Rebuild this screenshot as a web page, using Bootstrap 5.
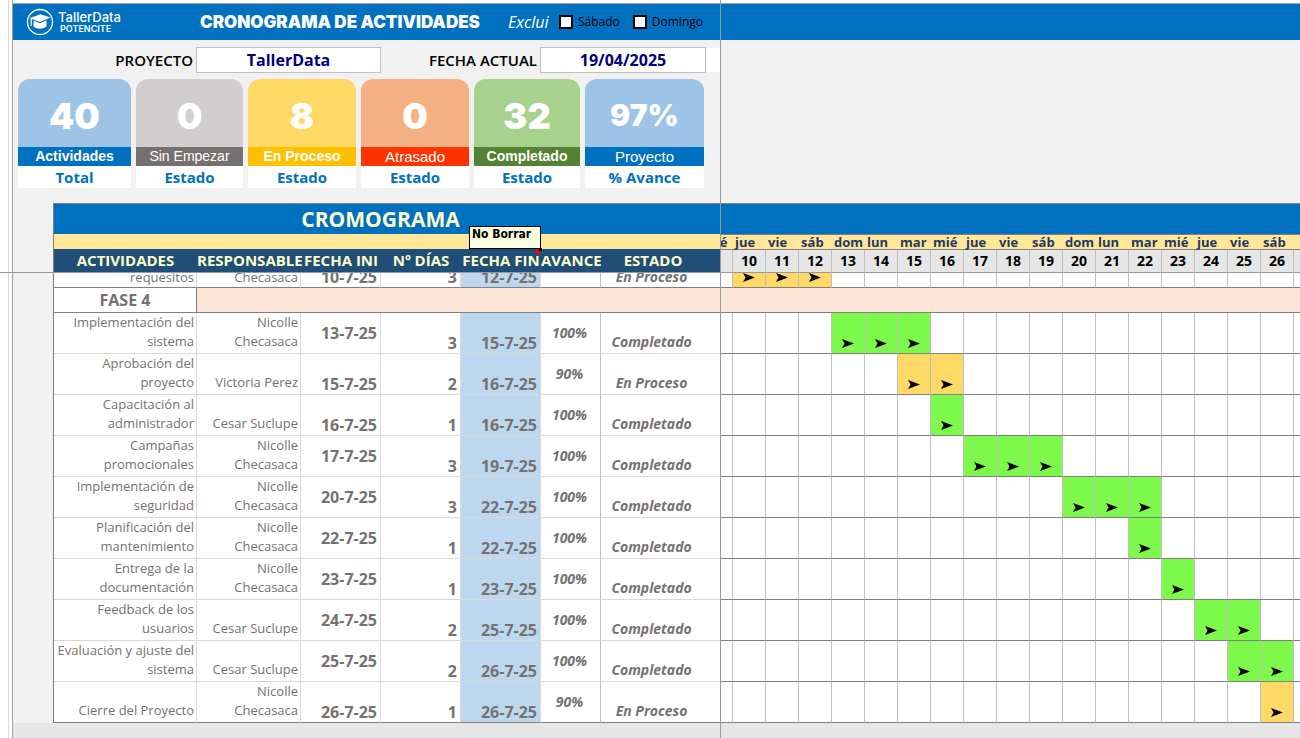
<!DOCTYPE html>
<html lang="es">
<head>
<meta charset="utf-8">
<meta name="viewport" content="width=device-width, initial-scale=1">
<title>Cronograma de actividades</title>
<link rel="stylesheet" href="https://cdn.jsdelivr.net/npm/bootstrap@5.3.0/dist/css/bootstrap.min.css">
<style>
  :root { --azul: #0070c0; --marino: #1f4e78; --linea: #7f7f7f; --tenue: #d9d9d9; --rejilla: #bfbfbf; --gris: #757171; }
  body { font-family: "Open Sans", "Noto Sans", sans-serif; font-size: 14px; line-height: 20px; color: #000; background: #fff; }
  .gutter { width: 13px; border-right: 1px solid #a0a0a0; padding-left: 8px; }
  .gutter::before { content: ""; display: block; height: 100%; border-left: 1px solid var(--tenue); }
  .sheet { background: #f1f1f1; padding-top: 3px; min-width: 0; }
  .sheet-tail { background: #e6e6e6; }
  .split-v { left: 720px; top: 0; bottom: 0; width: 1px; background: #999; z-index: 3; }
  .split-h { left: 0; top: 272px; width: 54px; height: 1px; background: #999; z-index: 3; }

  .topbar { background: var(--azul); border-top: 1px solid #a0a0a0; height: 37px; color: #fff; }
  .frozen { width: 707px; flex: none; }
  .above { height: 3px; margin-top: -3px; background: #fff; }
  .brand { width: 187px; padding-left: 13px; color: #fff; text-decoration: none; font-family: Inter, sans-serif; }
  .brand-name { font-size: 13px; line-height: 13px; font-weight: 500; }
  .brand-sub { font-size: 9px; line-height: 9px; font-weight: 600; padding-left: 2px; }
  .heading { font-family: Inter, sans-serif; font-weight: 900; font-size: 17px; width: 308px; }
  .excl { font-size: 16px; font-style: italic; width: 51px; }
  .topbar label { font-size: 12px; color: #000; }
  .tick { appearance: none; width: 14px; height: 14px; margin: 0 5px 0 0; background: #fff; border: 2px solid #000; border-radius: 0; }
  .tick:checked { background: #000; box-shadow: inset 0 0 0 2px #fff; }
  .gap-label { margin-right: 13px; }

  .fields { padding-top: 7px; }
  .fields label { font-weight: 600; font-size: 15px; text-align: right; padding-right: 3px; }
  .fields .form-control { height: 26px; padding: 0; border: 1px solid var(--rejilla); border-radius: 0; text-align: center; font-weight: 700; font-size: 16px; color: #000080; background: #fff; }
  .w-pro { width: 183px; } .in-pro { width: 185px; }
  .w-fec { width: 159px; } .in-fec { width: 166px; }
  .filler { background: #fff; height: 24px; }

  .tiles { display: grid; grid-template-columns: 118px 112px 113px 113px 111px 119px; padding: 6px 0 0 5px; height: 130px; }
  .tile { margin-right: 5px; text-align: center; }
  .tile:last-child { margin-right: 0; }
  .tile-num { height: 68px; border-radius: 12px 12px 0 0; color: #fff; font-family: Inter, sans-serif; font-weight: 900; font-size: 36px; line-height: 74px; }
  .tile-pct { font-size: 30px; line-height: 72px; }
  .tile-tag { height: 19px; color: #fff; font: 15px/19px "Liberation Sans", Arial, sans-serif; }
  .tile-tag.strong { font-weight: 700; }
  .tile-tag.strong, .tile-tag.tight { font-size: 14px; }
  .tile-foot { height: 22px; background: #fff; color: var(--azul); font-weight: 700; font-size: 15px; line-height: 23px; }

  .plan-wrap { padding-left: 40px; overflow: hidden; }
  .plan { table-layout: fixed; width: 100%; border-collapse: separate; border-spacing: 0; border-left: 1px solid var(--linea); background: #fff; }
  .plan th, .plan td { padding: 0; border: 0 solid var(--tenue); border-width: 0 1px 1px 0; white-space: nowrap; }
  .plan thead th { border-right-width: 0; font-weight: 700; text-align: center; }
  .c1 { width: 143px; } .c2 { width: 104px; } .c3, .c4, .c5 { width: 80px; } .c6 { width: 60px; } .c7 { width: 120px; } .c8 { width: 12px; } .cd { width: 33px; }
  .plan .r-title th { background: var(--azul); border-top: 1px solid var(--linea); height: 32px; font-size: 21px; color: #ffffcc; padding-right: 14px; border-bottom-color: #ffe699; }
  .plan .r-title th + th { border-bottom-color: var(--linea); }
  .plan .r-week th { background: #ffe699; height: 15px; line-height: 14px; color: #1f3864; border-bottom-color: var(--marino); font-size: 13px; text-align: left; }
  .plan .r-week th + th { border-bottom-color: var(--linea); padding-left: 2px; }
  .plan .r-head th { background: var(--marino); color: #ffffcc; height: 23px; line-height: 20px; padding-bottom: 2px; font-size: 15px; border-bottom-color: #999; }
  .plan .r-head .day { background: #e6e6e6; color: #000; font-size: 14px; line-height: 22px; padding-bottom: 0; border-right: 1px solid var(--rejilla); }
  .plan .cut { overflow: hidden; padding-left: 0 !important; }
  .cut span { display: flex; justify-content: flex-end; }
  .cut b { flex: none; width: 32px; padding-left: 2px; font-weight: inherit; }
  .plan .estado { padding-right: 16px; }

  .plan tbody td, .plan tbody th { color: var(--gris); text-align: right; vertical-align: bottom; height: 41px; font-weight: 400; }
  .plan tbody .fit { white-space: normal; padding-right: 2px; font-size: 13px; }
  .plan tbody tr:not(.partial) .fit { line-height: 19px; padding-bottom: 2px; }
  .plan tbody .num { padding-right: 3px; font-weight: 700; font-size: 16px; }
  .plan tbody .mid { vertical-align: middle; }
  .plan tbody .fin { background: #bdd7ee; }
  .plan tbody .ava, .plan tbody .est { font-style: italic; font-weight: 700; font-size: 14px; text-align: center; }
  .plan tbody .ava { vertical-align: middle; border-right-color: var(--rejilla); padding-right: 2px; }
  .plan tbody .est { padding-right: 18px; }
  .plan tbody tr:not(.partial) .est { padding-bottom: 1px; }
  .plan tbody .day { border-color: var(--rejilla); border-bottom-color: var(--linea); text-align: center; line-height: 0; padding-bottom: 5px; }
  .plan tbody .done { background: #7cf94a; }
  .plan tbody .doing { background: #ffd966; }
  .plan tbody .day svg { width: 12px; height: 9px; }
  .plan tbody .partial > * { height: 15px; border-bottom-color: var(--linea); }
  .partial .clip { height: 14px; overflow: hidden; display: flex; align-items: flex-end; justify-content: flex-end; }
  .partial .est .clip { justify-content: center; }
  .plan tbody .phase > * { height: 25px; border-bottom-color: var(--linea); border-right-color: var(--linea); }
  .plan tbody .phase th { font-size: 16px; font-weight: 700; text-align: center; vertical-align: middle; }
  .plan tbody .phase td { background: #fce4d6; }
  .plan tr > :last-child { border-right-width: 0 !important; }
  .plan tbody tr:last-child > * { border-bottom-color: var(--linea); }

  .note { left: 8px; top: -24px; width: 72px; height: 23px; background: #ffffe1; border: 1px solid #000; color: #000; font: 700 12px/15px "DejaVu Sans Condensed", sans-serif; text-align: left; padding-left: 2px; z-index: 2; }
  .note::after { content: ""; position: absolute; right: -2px; bottom: -3px; width: 3px; height: 3px; background: #000; }
  .note-mark { right: 1px; top: 0; border-top: 6px solid red; border-left: 6px solid transparent; }
</style>
</head>
<body class="d-flex min-vh-100 position-relative overflow-hidden">
<div class="split-v position-absolute"></div>
<div class="split-h position-absolute"></div>
<div class="gutter flex-shrink-0"></div>
<main class="sheet flex-grow-1 d-flex flex-column">
  <div class="above"></div>
  <header class="topbar">
    <div class="frozen d-flex align-items-center h-100">
      <a href="#" class="brand d-flex align-items-center gap-1">
        <svg width="28" height="28" viewBox="0 0 28 28" aria-hidden="true">
          <circle cx="14" cy="14" r="12.500" fill="none" stroke="#fff" stroke-width="1.300"/>
          <path d="M3.500 10.300 14.500 6.300 24.500 9.500 13.800 14z" fill="#fff"/>
          <path d="M7.500 12.800v6c3.500 2.600 9 2.600 13 0v-6.500L14 15.300z" fill="#fff"/>
          <path d="M5.200 11v7" stroke="#fff" stroke-width="1.200"/>
        </svg>
        <span class="d-flex flex-column"><span class="brand-name">TallerData</span><span class="brand-sub">POTENCITE</span></span>
      </a>
      <h1 class="heading m-0">CRONOGRAMA DE ACTIVIDADES</h1>
      <span class="excl">Exclui</span>
      <input class="tick" type="checkbox" id="sab"><label for="sab" class="gap-label">Sábado</label>
      <input class="tick" type="checkbox" id="dom"><label for="dom">Domingo</label>
    </div>
  </header>

  <section class="frozen">
    <div class="fields d-flex align-items-center">
      <label class="w-pro" for="proyecto">PROYECTO</label>
      <input class="form-control in-pro" id="proyecto" type="text" value="TallerData">
      <label class="w-fec" for="fecha">FECHA ACTUAL</label>
      <input class="form-control in-fec" id="fecha" type="text" value="19/04/2025">
      <span class="filler flex-grow-1"></span>
    </div>
    <div class="tiles">
      <div class="tile"><div class="tile-num" style="background:#9dc3e6">40</div><div class="tile-tag strong" style="background:#0070c0">Actividades</div><div class="tile-foot">Total</div></div>
      <div class="tile"><div class="tile-num" style="background:#d0cece">0</div><div class="tile-tag tight" style="background:#767171">Sin Empezar</div><div class="tile-foot">Estado</div></div>
      <div class="tile"><div class="tile-num" style="background:#ffd966">8</div><div class="tile-tag strong" style="background:#ffc000">En Proceso</div><div class="tile-foot">Estado</div></div>
      <div class="tile"><div class="tile-num" style="background:#f4b183">0</div><div class="tile-tag" style="background:#ff3300">Atrasado</div><div class="tile-foot">Estado</div></div>
      <div class="tile"><div class="tile-num" style="background:#a9d18e">32</div><div class="tile-tag strong" style="background:#548235">Completado</div><div class="tile-foot">Estado</div></div>
      <div class="tile"><div class="tile-num tile-pct" style="background:#9dc3e6">97%</div><div class="tile-tag" style="background:#0070c0">Proyecto</div><div class="tile-foot">% Avance</div></div>
    </div>
  </section>

  <div class="plan-wrap">
    <table class="plan">
      <colgroup id="cols"><col class="c1"><col class="c2"><col class="c3"><col class="c4"><col class="c5"><col class="c6"><col class="c7"><col class="c8"></colgroup>
      <thead>
        <tr class="r-title"><th colspan="7">CROMOGRAMA</th><th id="titlefill"></th></tr>
        <tr class="r-week" id="week"><th colspan="7"></th><th class="cut"><span><b>mié</b></span></th></tr>
        <tr class="r-head" id="head">
          <th>ACTIVIDADES</th><th>RESPONSABLE</th><th>FECHA INI</th><th>Nº DÍAS</th>
          <th class="position-relative">FECHA FIN<span class="note position-absolute">No Borrar</span><span class="note-mark position-absolute"></span></th>
          <th>AVANCE</th><th class="estado">ESTADO</th><th class="day cut"><span><b>9</b></span></th>
        </tr>
      </thead>
      <tbody id="body"></tbody>
    </table>
  </div>
  <div class="sheet-tail flex-grow-1"></div>
</main>

<script src="https://cdn.jsdelivr.net/npm/bootstrap@5.3.0/dist/js/bootstrap.bundle.min.js"></script>
<script>
  const FIRST = 10, LAST = 26;
  const names = ["sáb", "dom", "lun", "mar", "mié", "jue", "vie"];
  const arrow = '<svg viewBox="0 0 12 9" aria-hidden="true"><path d="M0 0 12 4.500 0 9 2.500 4.500z"/></svg>';
  // julio de 2025 empieza en martes; el día 5 es sábado
  const weekday = d => names[(d + 2) % 7];
  // actividad, responsable, inicio, días, fin, avance, fecha inicial centrada
  const tasks = [
    ["Implementación del sistema", "Nicolle Checasaca", 13, 3, 15, 100, true],
    ["Aprobación del proyecto", "Victoria Perez", 15, 2, 16, 90, false],
    ["Capacitación al administrador", "Cesar Suclupe", 16, 1, 16, 100, false],
    ["Campañas promocionales", "Nicolle Checasaca", 17, 3, 19, 100, true],
    ["Implementación de seguridad", "Nicolle Checasaca", 20, 3, 22, 100, true],
    ["Planificación del mantenimiento", "Nicolle Checasaca", 22, 1, 22, 100, true],
    ["Entrega de la documentación", "Nicolle Checasaca", 23, 1, 23, 100, true],
    ["Feedback de los usuarios", "Cesar Suclupe", 24, 2, 25, 100, true],
    ["Evaluación y ajuste del sistema", "Cesar Suclupe", 25, 2, 26, 100, true],
    ["Cierre del Proyecto", "Nicolle Checasaca", 26, 1, 26, 90, false]
  ];
  const bars = (a, b, kind) => {
    let out = '<td class="day"></td>';
    for (let d = FIRST; d <= LAST + 1; d++) {
      const on = d >= a && d <= b;
      out += `<td class="day ${on ? kind : ""}">${on ? arrow : ""}</td>`;
    }
    return out;
  };
  let cols = "", week = "", head = "";
  for (let d = FIRST; d <= LAST; d++) {
    cols += '<col class="cd">';
    week += `<th>${weekday(d)}</th>`;
    head += `<th class="day">${d}</th>`;
  }
  document.getElementById("cols").insertAdjacentHTML("beforeend", cols + "<col>");
  document.getElementById("week").insertAdjacentHTML("beforeend", week + "<th></th>");
  document.getElementById("head").insertAdjacentHTML("beforeend", head + '<th class="day"></th>');
  document.getElementById("titlefill").colSpan = LAST - FIRST + 3;
  const clip = t => `<div class="clip">${t}</div>`;
  let rows = `<tr class="partial"><td class="fit">${clip("requesitos")}</td><td class="fit">${clip("Checasaca")}</td><td class="num">${clip("10-7-25")}</td><td class="num">${clip("3")}</td><td class="num fin">${clip("12-7-25")}</td><td class="ava"></td><td class="est">${clip("En Proceso")}</td>${bars(10, 12, "doing")}</tr>`;
  rows += `<tr class="phase"><th>FASE 4</th><td colspan="${LAST - FIRST + 9}"></td></tr>`;
  for (const [act, who, a, n, b, pct, mid] of tasks) {
    const full = pct === 100;
    rows += `<tr><td class="fit">${act}</td><td class="fit">${who}</td><td class="num ${mid ? "mid" : ""}">${a}-7-25</td><td class="num">${n}</td><td class="num fin">${b}-7-25</td><td class="ava">${pct}%</td><td class="est">${full ? "Completado" : "En Proceso"}</td>${bars(a, b, full ? "done" : "doing")}</tr>`;
  }
  document.getElementById("body").innerHTML = rows;
</script>
</body>
</html>
